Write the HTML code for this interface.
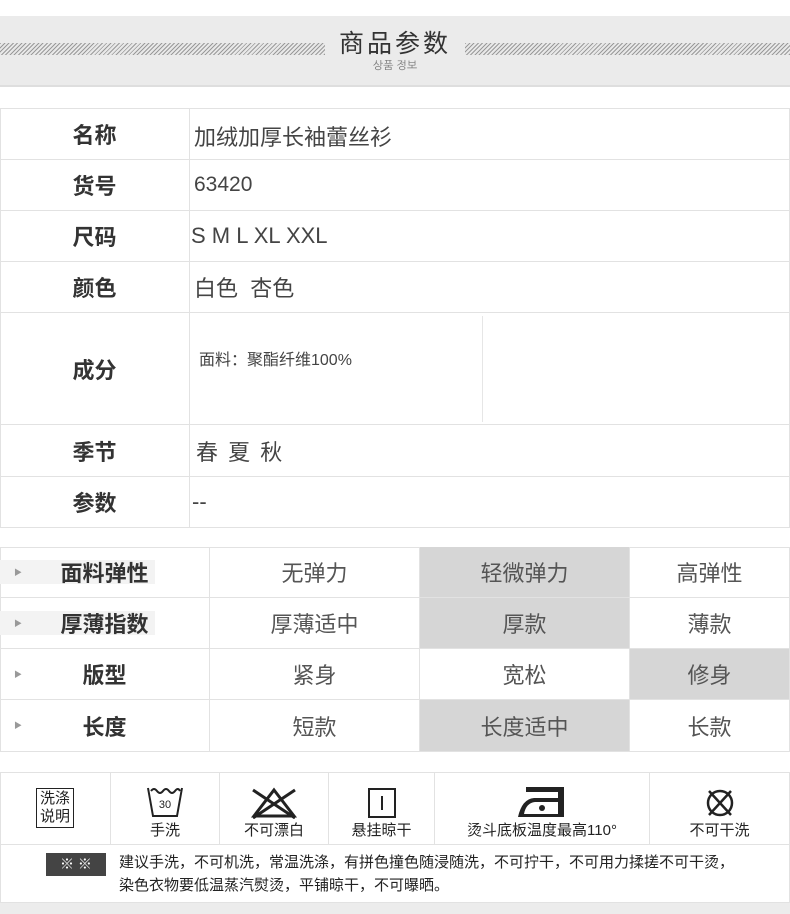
<!DOCTYPE html>
<html><head><meta charset="utf-8"><style>
*{margin:0;padding:0;box-sizing:border-box}
body{width:790px;height:914px;background:#fff;position:relative;overflow:hidden;font-family:"Liberation Sans","Noto Sans CJK SC",sans-serif;color:#444}
.a{position:absolute}
.c{position:absolute;border-right:1px solid #e2e2e2;border-bottom:1px solid #e2e2e2;display:flex;align-items:center}
.lb{justify-content:center;font-weight:bold;font-size:22px;color:#333}
.v{font-size:22px;color:#444;padding-left:4px}
.t2{justify-content:center;font-size:22px;color:#555}
.g{background:#d6d6d6}
.ar{position:absolute;left:14px;font-size:8px;color:#999}
.ci{flex-direction:column;justify-content:flex-end;padding-bottom:4px;font-size:15px;color:#222}
</style></head><body>
<div class="a" style="left:0;top:16px;width:790px;height:71px;background:#ebebeb;border-bottom:2px solid #dedede"></div>
<div class="a" style="left:0;top:43px;width:325px;height:12px;background:repeating-linear-gradient(135deg,#9a9a9a 0 1px,#e8e8e8 1px 3px)"></div>
<div class="a" style="left:465px;top:43px;width:325px;height:12px;background:repeating-linear-gradient(135deg,#9a9a9a 0 1px,#e8e8e8 1px 3px)"></div>
<div class="a" style="left:325px;top:29px;width:140px;text-align:center;font-size:25px;color:#333;letter-spacing:3px;line-height:30px">商品参数</div>
<div class="a" style="left:325px;top:59px;width:140px;text-align:center;font-size:11px;color:#777;font-family:'Liberation Sans','NanumGothic',sans-serif">상품 정보</div>

<div class="a" style="left:0;top:108px;width:790px;height:420px;border-left:1px solid #e2e2e2;border-top:1px solid #e2e2e2"></div>
<div class="c lb" style="left:0;top:108px;width:190px;height:52px">名称</div><div class="c v" style="left:190px;top:108px;width:600px;height:52px;align-items:flex-start;padding-top:12px">加绒加厚长袖蕾丝衫</div>
<div class="c lb" style="left:0;top:160px;width:190px;height:51px">货号</div><div class="c v" style="left:190px;top:160px;width:600px;height:51px;font-size:21px">63420</div>
<div class="c lb" style="left:0;top:211px;width:190px;height:51px">尺码</div><div class="c v" style="left:190px;top:211px;width:600px;height:51px;padding-left:1px">S M L XL XXL</div>
<div class="c lb" style="left:0;top:262px;width:190px;height:51px">颜色</div><div class="c v" style="left:190px;top:262px;width:600px;height:51px">白色&nbsp; 杏色</div>
<div class="c lb" style="left:0;top:313px;width:190px;height:112px">成分</div><div class="c v" style="left:190px;top:313px;width:600px;height:112px;font-size:16px;align-items:flex-start;padding-top:33px;padding-left:9px">面料：聚酯纤维100%</div>
<div class="a" style="left:482px;top:316px;width:1px;height:106px;background:#e6e6e6"></div>
<div class="c lb" style="left:0;top:425px;width:190px;height:52px">季节</div><div class="c v" style="left:190px;top:425px;width:600px;height:52px;padding-left:6px;letter-spacing:2px">春 夏 秋</div>
<div class="c lb" style="left:0;top:477px;width:190px;height:51px">参数</div><div class="c v" style="left:190px;top:477px;width:600px;height:51px;padding-left:2px">--</div>

<div class="a" style="left:0;top:547px;width:790px;height:205px;border-left:1px solid #e2e2e2;border-top:1px solid #e2e2e2"></div>
<div class="c lb" style="left:0;top:547px;width:210px;height:51px"><div class="a" style="left:0;top:13px;width:155px;height:24px;background:#f3f3f3"></div><span class="ar">▶</span><span style="position:relative">面料弹性</span></div>
<div class="c t2" style="left:210px;top:547px;width:210px;height:51px">无弹力</div><div class="c t2 g" style="left:420px;top:547px;width:210px;height:51px">轻微弹力</div><div class="c t2" style="left:630px;top:547px;width:160px;height:51px">高弹性</div>
<div class="c lb" style="left:0;top:598px;width:210px;height:51px"><div class="a" style="left:0;top:13px;width:155px;height:24px;background:#f3f3f3"></div><span class="ar">▶</span><span style="position:relative">厚薄指数</span></div>
<div class="c t2" style="left:210px;top:598px;width:210px;height:51px">厚薄适中</div><div class="c t2 g" style="left:420px;top:598px;width:210px;height:51px">厚款</div><div class="c t2" style="left:630px;top:598px;width:160px;height:51px">薄款</div>
<div class="c lb" style="left:0;top:649px;width:210px;height:51px"><span class="ar">▶</span>版型</div>
<div class="c t2" style="left:210px;top:649px;width:210px;height:51px">紧身</div><div class="c t2" style="left:420px;top:649px;width:210px;height:51px">宽松</div><div class="c t2 g" style="left:630px;top:649px;width:160px;height:51px">修身</div>
<div class="c lb" style="left:0;top:700px;width:210px;height:52px"><span class="ar">▶</span>长度</div>
<div class="c t2" style="left:210px;top:700px;width:210px;height:52px">短款</div><div class="c t2 g" style="left:420px;top:700px;width:210px;height:52px">长度适中</div><div class="c t2" style="left:630px;top:700px;width:160px;height:52px">长款</div>

<div class="a" style="left:0;top:903px;width:790px;height:11px;background:#ececec"></div>
<div class="a" style="left:0;top:772px;width:790px;height:131px;border-left:1px solid #e2e2e2;border-top:1px solid #e2e2e2"></div>
<div class="c" style="left:0;top:772px;width:111px;height:73px;justify-content:center"><div style="border:1.5px solid #222;width:38px;height:40px;font-size:15px;line-height:18px;text-align:center;color:#222;padding-top:1px">洗涤<br>说明</div></div>
<div class="c ci" style="left:111px;top:772px;width:109px;height:73px"><svg width="40" height="34" viewBox="0 0 40 34"><path d="M3 3 L8 31 H32 L37 3 M6 6 q3 -4 6 0 q3 4 6 0 q3 -4 6 0 q3 4 6 0 q3 -4 5 0" fill="none" stroke="#222" stroke-width="2"/><text x="20" y="23" font-size="11" text-anchor="middle" fill="#222">30</text></svg>手洗</div>
<div class="c ci" style="left:220px;top:772px;width:109px;height:73px"><svg width="54" height="32" viewBox="0 0 54 32"><path d="M27 3 L47 29 H7 Z M6 3 L48 31 M48 3 L6 31" fill="none" stroke="#222" stroke-width="3"/></svg>不可漂白</div>
<div class="c ci" style="left:329px;top:772px;width:106px;height:73px"><svg width="30" height="32" viewBox="0 0 30 32"><rect x="2" y="2" width="26" height="28" fill="none" stroke="#222" stroke-width="2"/><path d="M15 9v14" stroke="#222" stroke-width="2"/></svg>悬挂晾干</div>
<div class="c ci" style="left:435px;top:772px;width:215px;height:73px"><svg width="56" height="34" viewBox="0 0 56 34"><path d="M12 2 H50 V32 H4 Q8 14 20 13 H44 V7 H12 Z" fill="#222"/><path d="M10 29 Q12 18 21 17 H44 V29Z" fill="#fff"/><circle cx="28" cy="23" r="3" fill="#222"/></svg>烫斗底板温度最高110°</div>
<div class="c ci" style="left:650px;top:772px;width:140px;height:73px"><svg width="34" height="32" viewBox="0 0 34 32"><circle cx="17" cy="16" r="12" fill="none" stroke="#222" stroke-width="2.5"/><path d="M6 4 L28 28 M28 4 L6 28" stroke="#222" stroke-width="2.5"/></svg>不可干洗</div>
<div class="c" style="left:0;top:845px;width:790px;height:58px"></div>
<div class="a" style="left:46px;top:853px;width:60px;height:23px;background:#444;color:#fff;font-size:14px;text-align:center;line-height:23px">※ ※</div>
<div class="a" style="left:119px;top:851px;width:670px;font-size:15px;line-height:23px;color:#222">建议手洗，不可机洗，常温洗涤，有拼色撞色随浸随洗，不可拧干，不可用力揉搓不可干烫，<br>染色衣物要低温蒸汽熨烫，平铺晾干，不可曝晒。</div>
</body></html>
